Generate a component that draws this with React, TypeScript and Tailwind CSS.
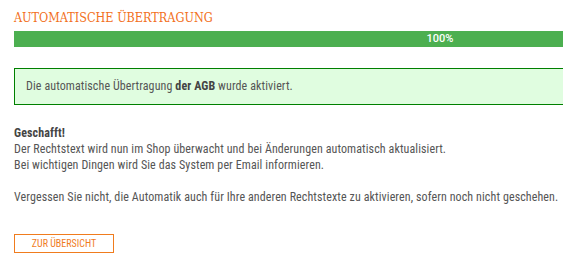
export default function App() {
  return (
    <div className="w-full overflow-hidden bg-white pl-[14px] pt-[9px] pb-4 font-['Roboto_Condensed',sans-serif] text-[12px] text-[#555]">
      <h1 className="font-['DejaVu_Serif_Condensed',serif] text-[12.5px] leading-[18px] uppercase text-[#f26f21]">
        Automatische Übertragung
      </h1>
      <div className="mt-[4px] flex h-[16px] w-[852px] items-center justify-center bg-[#4caf50] font-['Roboto',sans-serif] text-[11px] font-medium text-white">
        100%
      </div>
      <div className="mt-[21px] w-[700px] border border-[#008000] bg-[#e0fde0] py-[10px] pl-[11px] leading-[15px] tracking-[0.1px]">
        Die automatische Übertragung <b className="font-bold text-[#444]">der AGB</b> wurde aktiviert.
      </div>
      <div className="mt-[20px] leading-[16px] tracking-[0.1px]">
        <p className="font-bold text-[#444]">Geschafft!</p>
        <p>Der Rechtstext wird nun im Shop überwacht und bei Änderungen automatisch aktualisiert.</p>
        <p>Bei wichtigen Dingen wird Sie das System per Email informieren.</p>
        <p className="mt-[16px]">
          Vergessen Sie nicht, die Automatik auch für Ihre anderen Rechtstexte zu aktivieren, sofern noch nicht geschehen.
        </p>
      </div>
      <button className="mt-[29px] flex h-[19px] w-[100px] items-center justify-center border border-[#f07c1e] text-[10px] uppercase text-[#f07c1e]">
        Zur Übersicht
      </button>
    </div>
  );
}
